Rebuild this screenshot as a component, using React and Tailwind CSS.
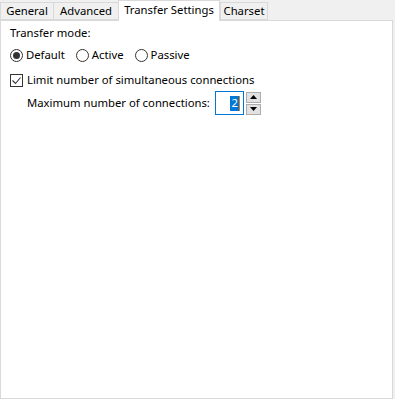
import React from 'react'

const TABS = [
  { label: 'General', w: 'w-[54px]' },
  { label: 'Advanced', w: 'w-[66px]' },
  { label: 'Transfer Settings', w: 'w-[102px]', active: true },
  { label: 'Charset', w: 'w-[48px]' },
]

function Radio({ checked, label }) {
  return (
    <label className="flex items-center gap-[3px]">
      <span className="w-[13px] h-[13px] rounded-full border border-[#333] bg-white flex items-center justify-center">
        {checked && <span className="w-[7px] h-[7px] rounded-full bg-[#333]" />}
      </span>
      <span>{label}</span>
    </label>
  )
}

function Spinner() {
  return (
    <div className="flex flex-col gap-px ml-[2px]">
      <span className="w-[15px] h-[11px] bg-[#e1e1e1] border border-[#adadad] flex items-center justify-center">
        <svg width="7" height="4" viewBox="0 0 7 4"><path d="M3.5 0L7 4H0z" fill="#000" /></svg>
      </span>
      <span className="w-[15px] h-[11px] bg-[#e1e1e1] border border-[#adadad] flex items-center justify-center">
        <svg width="7" height="4" viewBox="0 0 7 4"><path d="M0 0h7L3.5 4z" fill="#000" /></svg>
      </span>
    </div>
  )
}

export default function App() {
  return (
    <div className="w-[395px] h-[399px] bg-[#f0f0f0] text-[11.3px] text-black leading-none"
         style={{ fontFamily: '"Noto Sans", "Segoe UI", sans-serif' }}>
      {/* Tabs */}
      <div className="flex items-end h-[20px]">
        {TABS.map(t => t.active ? (
          <div key={t.label}
               className={`${t.w} h-[21px] -mb-px relative z-10 bg-white border border-b-0 border-[#d9d9d9] flex items-center justify-center pb-[2px]`}>
            {t.label}
          </div>
        ) : (
          <div key={t.label}
               className={`${t.w} h-[18px] -mr-px bg-[#f0f0f0] border border-[#d9d9d9] flex items-center justify-center`}>
            {t.label}
          </div>
        ))}
      </div>

      {/* Panel */}
      <div className="w-[393px] h-[379px] bg-white border border-[#d9d9d9] px-[9px] pt-[5px]">
        <div className="h-[14px] flex items-center">Transfer mode:</div>
        <div className="flex items-center gap-[11px] mt-[8px] h-[14px]">
          <Radio checked label="Default" />
          <Radio label="Active" />
          <Radio label="Passive" />
        </div>

        <label className="flex items-center gap-[4px] mt-[11px] h-[14px]">
          <span className="w-[13px] h-[13px] border border-[#333] bg-white flex items-center justify-center">
            <svg width="11" height="11" viewBox="0 0 11 11">
              <path d="M1.5 5.5l3 3 5-6" fill="none" stroke="#333" strokeWidth="1.1" />
            </svg>
          </span>
          <span>Limit number of simultaneous connections</span>
        </label>

        <div className="flex items-center mt-[4px] pl-[17px]">
          <span className="mr-[5px]">Maximum number of connections:</span>
          <div className="w-[29px] h-[24px] border border-[#0078d7] bg-white flex items-center justify-end pr-[3px]">
            <span className="bg-[#0078d7] text-white px-px h-[15px] flex items-center">2</span>
            <span className="w-px h-[15px] bg-[#e67e22]" />
          </div>
          <Spinner />
        </div>
      </div>
    </div>
  )
}
